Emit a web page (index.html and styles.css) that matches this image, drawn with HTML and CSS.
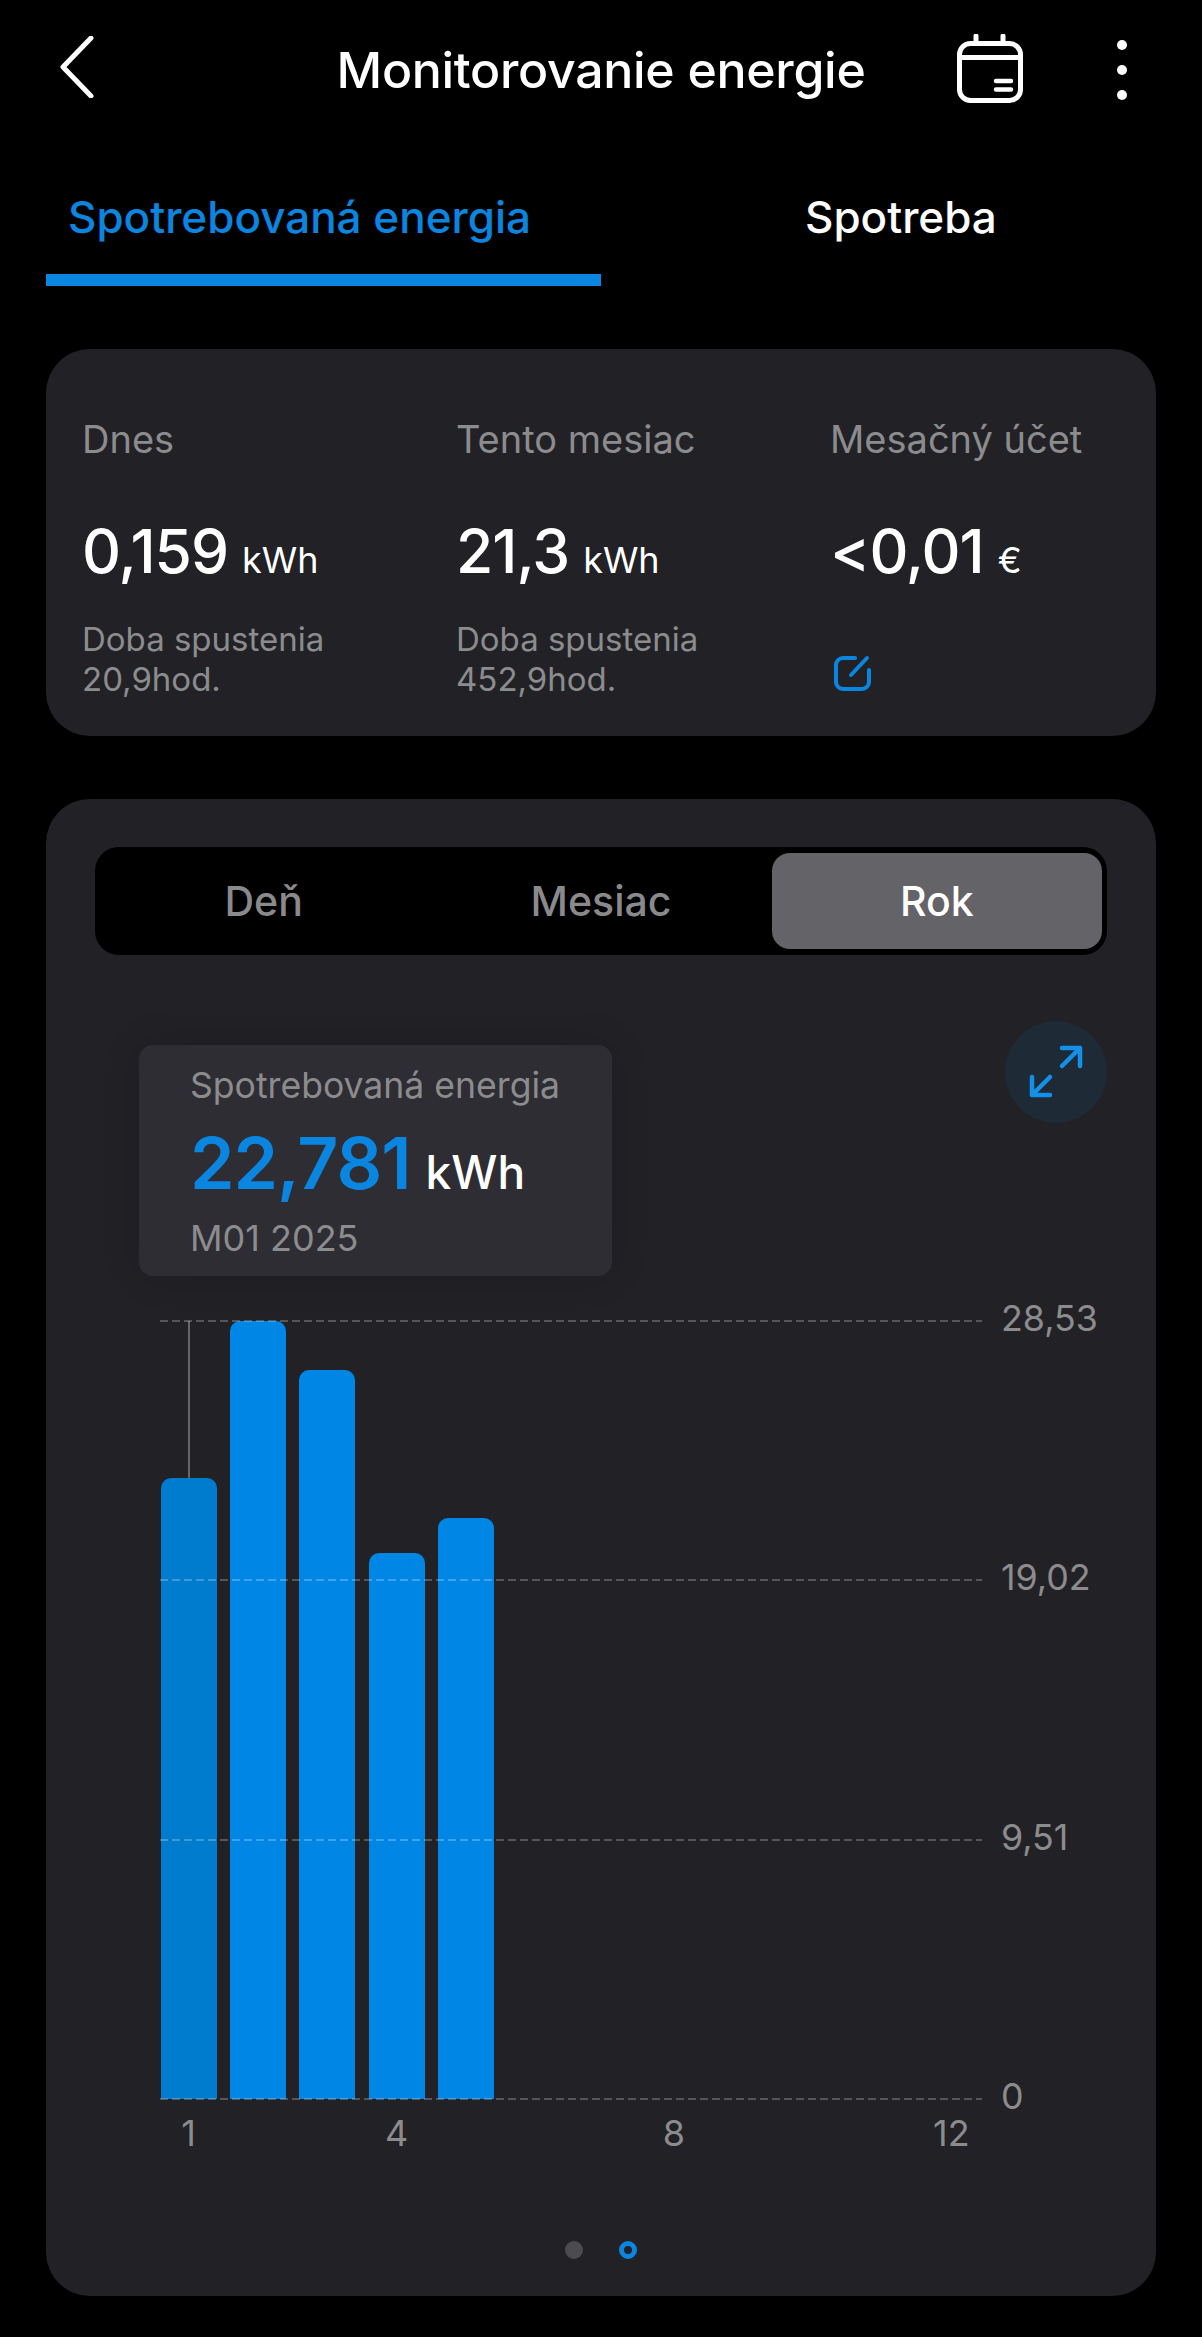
FILE: index.html
```html
<!DOCTYPE html>
<html lang="sk">
<head>
<meta charset="utf-8">
<title>Monitorovanie energie</title>
<link rel="stylesheet" href="styles.css">
</head>
<body>
<header class="header">
  <svg class="back" width="34" height="62" viewBox="0 0 34 62"><path d="M31 2 3 31l28 29" fill="none" stroke="#fff" stroke-width="5" stroke-linecap="round" stroke-linejoin="round"/></svg>
  <h1 class="title">Monitorovanie energie</h1>
  <div class="actions">
    <svg class="cal" width="66" height="70" viewBox="0 0 66 70" fill="none" stroke="#fff" stroke-linecap="round">
      <rect x="2.5" y="9.5" width="61" height="57" rx="11" stroke-width="5"/>
      <path d="M2.5 23.5h61" stroke-width="5"/>
      <path d="M19 2v7M46 2v7" stroke-width="5"/>
      <path d="M39 47h15M39 55.500h15" stroke-width="4.500"/>
    </svg>
    <div class="dots"><i></i><i></i><i></i></div>
  </div>
</header>

<nav class="tabs">
  <div class="tab tab-active">Spotrebovaná energia</div>
  <div class="tab tab-plain">Spotreba</div>
</nav>

<section class="card stats">
  <div class="stat">
    <div class="stat-label">Dnes</div>
    <div class="stat-value">0,159<span class="stat-unit">kWh</span></div>
    <div class="stat-note">Doba spustenia<br>20,9hod.</div>
  </div>
  <div class="stat">
    <div class="stat-label">Tento mesiac</div>
    <div class="stat-value">21,3<span class="stat-unit">kWh</span></div>
    <div class="stat-note">Doba spustenia<br>452,9hod.</div>
  </div>
  <div class="stat">
    <div class="stat-label">Mesačný účet</div>
    <div class="stat-value">&lt;0,01<span class="stat-unit">€</span></div>
    <svg class="edit" width="37" height="36" viewBox="0 0 37 36" fill="none" stroke="#0a86e0" stroke-width="4" stroke-linecap="round"><path d="M21 3H9a7 7 0 0 0-7 7v17a7 7 0 0 0 7 7h19a7 7 0 0 0 7-7V15"/><path d="M17 20 33 3"/></svg>
  </div>
</section>

<section class="card usage">
  <div class="segment">
    <div class="seg">Deň</div>
    <div class="seg">Mesiac</div>
    <div class="seg seg-on">Rok</div>
  </div>

  <div class="chart-head">
    <div class="tip">
      <div class="tip-label">Spotrebovaná energia</div>
      <div class="tip-value">22,781<span class="tip-unit">kWh</span></div>
      <div class="tip-date">M01 2025</div>
    </div>
    <div class="expand">
      <svg width="56" height="56" viewBox="0 0 56 56" fill="none" stroke="#1391ea" stroke-width="4.500" stroke-linecap="round" stroke-linejoin="round"><path d="M34 4h18v18M52 4 34 22"/><path d="M22 51H4V33M4 51l18-18"/></svg>
    </div>
  </div>

  <div class="plot">
    <div class="bars">
      <div class="slot"><div class="bar bar-selected" style="height:79.8%"></div></div>
      <div class="slot"><div class="bar" style="height:100%"></div></div>
      <div class="slot"><div class="bar" style="height:93.7%"></div></div>
      <div class="slot"><div class="bar" style="height:70.2%"></div></div>
      <div class="slot"><div class="bar" style="height:74.7%"></div></div>
    </div>
    <div class="rules">
      <div class="rule"><div class="dash"></div><span class="ylabel">28,53</span></div>
      <div class="rule"><div class="dash"></div><span class="ylabel">19,02</span></div>
      <div class="rule"><div class="dash"></div><span class="ylabel">9,51</span></div>
      <div class="rule"><div class="dash"></div><span class="ylabel">0</span></div>
    </div>
  </div>

  <div class="xaxis">
    <span>1</span><span></span><span></span><span>4</span><span></span><span></span><span></span><span>8</span><span></span><span></span><span></span><span>12</span>
  </div>

  <div class="pager"><i class="pip"></i><i class="pip pip-on"></i></div>
</section>
</body>
</html>
```
FILE: styles.css
```css
* { box-sizing: border-box; }
html, body { margin: 0; padding: 0; background: #000; }
body { font-family: Inter, "Noto Sans", sans-serif; color: #fff; height: 2337px; overflow: hidden; }

.header { display: grid; grid-template-columns: 1fr auto 1fr; align-items: center; height: 140px; padding: 0 60px; }
.back { margin-top: -6px; }
.title { margin: 0; font-size: 50px; font-weight: 500; letter-spacing: -0.3px; text-align: center; white-space: nowrap; }
.actions { display: flex; justify-content: flex-end; align-items: center; gap: 94px; margin-right: 15px; }
.cal { margin-top: -2px; }
.dots { display: flex; flex-direction: column; gap: 15px; margin-top: -1px; }
.dots i { display: block; width: 10px; height: 10px; border-radius: 50%; background: #fff; }

.tabs { display: flex; margin: 0 46px; height: 146px; }
.tab { flex: 0 0 555px; font-size: 44px; font-weight: 450; padding-top: 52px; line-height: 50px; white-space: nowrap; }
.tab-active { color: #0a86e0; padding-left: 22px; border-bottom: 12px solid #0a86e0; }
.tab-plain { padding-left: 204px; }

.card { margin: 63px 46px 0; background: #212126; border-radius: 44px; }

.stats { height: 387px; padding: 0 27px 0 36px; display: grid; grid-template-columns: repeat(3, 374px); }
.stat { padding-top: 67px; }
.stat-label { font-size: 38px; line-height: 46px; color: #8c8c8e; }
.stat-value { font-size: 60.5px; line-height: 70px; margin-top: 54px; font-weight: 500; letter-spacing: -1px; white-space: nowrap; }
.stat-unit { font-size: 36px; margin-left: 14px; font-weight: 400; letter-spacing: 0; }
.stat-note { font-size: 33px; line-height: 40px; color: #8c8c8e; margin-top: 24px; }
.edit { display: block; margin: 60px 0 0 4px; }

.usage { height: 1497px; padding: 48px 0 0; }
.segment { display: grid; grid-template-columns: repeat(3, 1fr); height: 108px; margin: 0 49px; background: #000; border-radius: 24px; }
.seg { display: flex; align-items: center; justify-content: center; font-size: 41px; font-weight: 500; color: #8a8a8c; border-radius: 18px; }
.seg-on { background: #636368; color: #fff; margin: 6px 5px 6px 2px; }

.chart-head { display: flex; justify-content: space-between; align-items: flex-start; height: 366px; padding: 66px 49px 0 93px; }
.tip { width: 473px; height: 231px; margin-top: 24px; padding: 18px 0 0 51px; background: #2d2d33; border-radius: 14px; box-shadow: 0 0 40px rgba(0, 0, 0, .12); }
.tip-label { font-size: 35.6px; line-height: 46px; color: #8c8c8e; white-space: nowrap; }
.tip-value { font-size: 71.5px; line-height: 88px; margin-top: 10px; font-weight: 600; color: #0a86e0; letter-spacing: -1px; white-space: nowrap; }
.tip-unit { font-size: 46px; font-weight: 450; color: #fff; margin-left: 15px; letter-spacing: 0; }
.tip-date { font-size: 36px; line-height: 46px; color: #8c8c8e; margin-top: -1px; }
.expand { width: 102px; height: 102px; border-radius: 50%; background: #1e2a35; display: flex; align-items: center; justify-content: center; }

.plot { position: relative; height: 778px; width: 832px; margin-left: 108px; }
.bars { display: grid; grid-template-columns: repeat(12, 1fr); height: 100%; }
.slot { display: flex; align-items: flex-end; justify-content: center; }
.bar { position: relative; width: 56px; background: #0087e6; border-radius: 10px 10px 0 0; }
.bar-selected { background: #007ccf; }
.bar-selected::before { content: ""; position: absolute; left: 27px; bottom: 100%; width: 2px; height: 157px; background: #66666a; }

.rules { position: absolute; top: 0; bottom: 0; left: 6px; display: flex; flex-direction: column; justify-content: space-between; }
.rule { height: 0; display: flex; align-items: center; gap: 19px; }
.dash { width: 822px; height: 2px; background: repeating-linear-gradient(90deg, rgba(255,255,255,.24) 0 8px, transparent 8px 12px); }
.ylabel { font-size: 35.8px; line-height: 40px; color: #8c8c8e; padding-bottom: 6px; }

.xaxis { display: grid; grid-template-columns: repeat(12, 1fr); width: 832px; margin: 14px 0 0 108px; font-size: 36px; line-height: 40px; color: #8c8c8e; text-align: center; }

.pager { display: flex; justify-content: center; gap: 36px; margin-top: 88px; }
.pip { display: block; width: 18px; height: 18px; border-radius: 50%; background: #4b4b50; }
.pip-on { background: transparent; border: 5px solid #0a86e0; }
```
